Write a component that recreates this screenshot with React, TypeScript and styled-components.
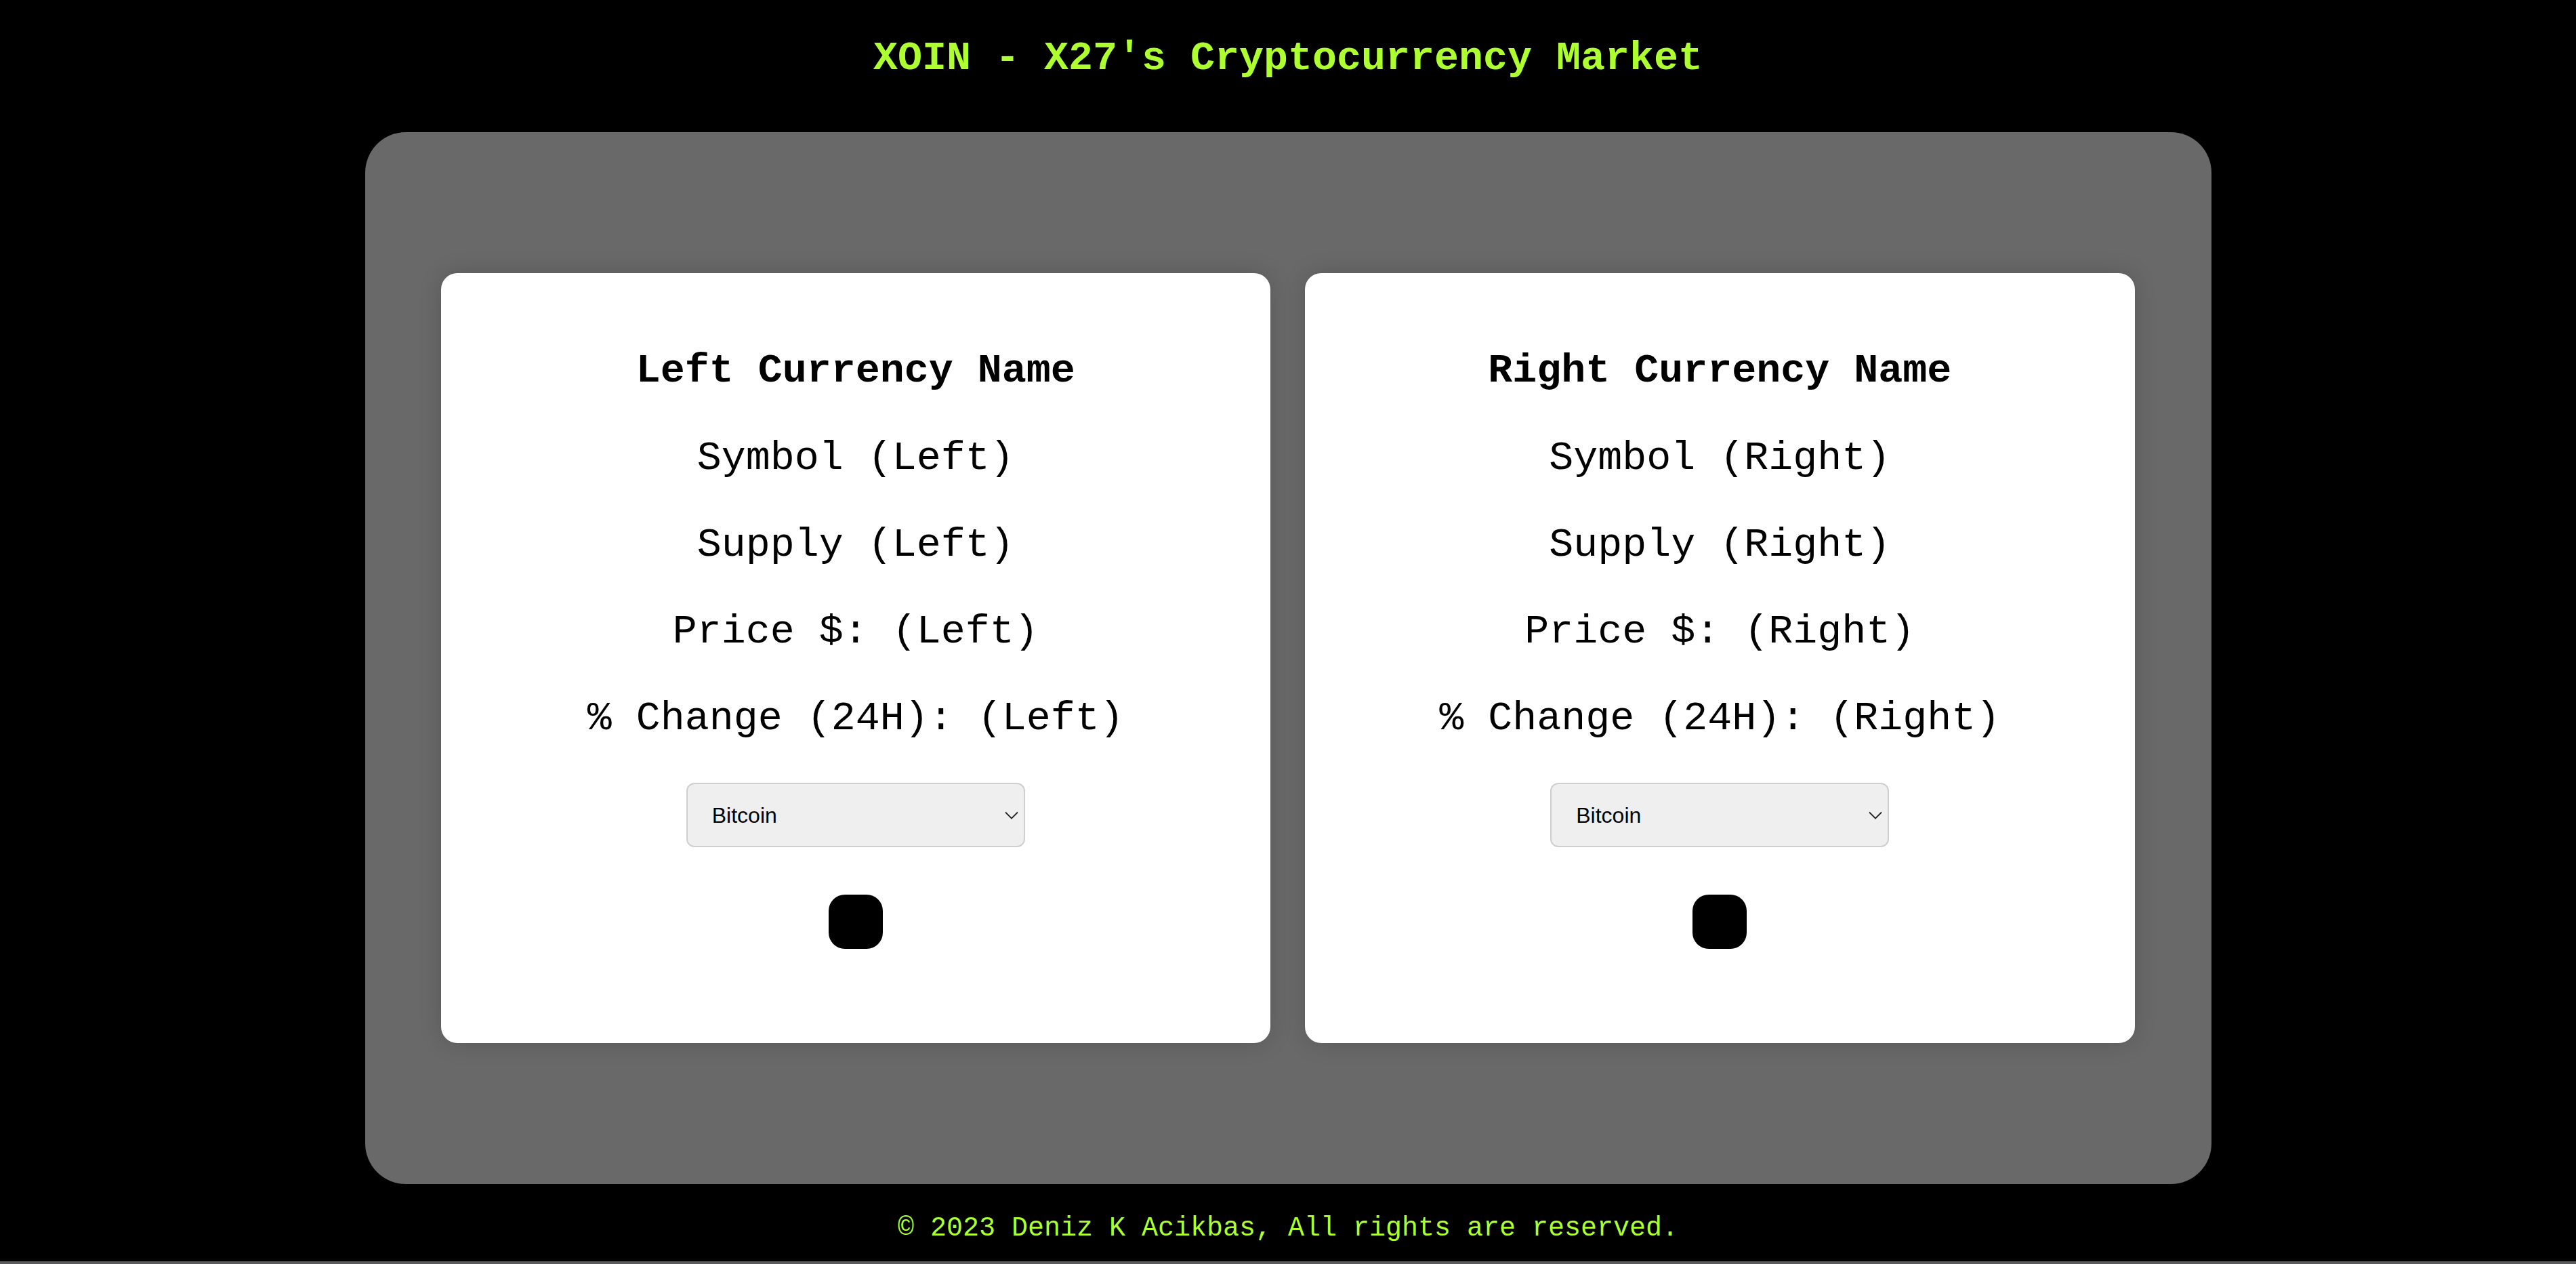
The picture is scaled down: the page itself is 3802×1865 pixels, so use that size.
import React from "react";
import styled, { createGlobalStyle } from "styled-components";

const GlobalStyle = createGlobalStyle`
  html {
    background: #5b5b5d;
  }
  body {
    margin: 0;
    font-family: "Liberation Mono", "Courier New", monospace;
  }
`;

const Page = styled.div`
  min-height: 1861px;
  background: #000;
  display: flex;
  flex-direction: column;
  align-items: center;
`;

const Title = styled.h1`
  margin: 52px 0 0;
  font-family: "Liberation Mono", "Courier New", monospace;
  font-size: 60px;
  line-height: 68px;
  font-weight: 700;
  color: #adff2f;
`;

const Panel = styled.main`
  margin-top: 75px;
  width: 2725px;
  box-sizing: border-box;
  padding: 208px 113px 208px 112px;
  background: #696969;
  border-radius: 60px;
  display: grid;
  grid-template-columns: 1fr 1fr;
  gap: 51px;
`;

const Card = styled.section`
  background: #fff;
  border-radius: 24px;
  box-shadow: 0 0 34px rgba(0, 0, 0, 0.16);
  padding: 110px 0 139px;
  display: flex;
  flex-direction: column;
  align-items: center;
`;

const CardHeading = styled.h2`
  margin: 0 0 1px;
  font-family: "Liberation Mono", "Courier New", monospace;
  font-size: 60px;
  line-height: 68px;
  font-weight: 700;
  color: #000;
`;

const Field = styled.p`
  margin: 60px 0 0;
  font-family: "Liberation Mono", "Courier New", monospace;
  font-size: 60px;
  line-height: 68px;
  font-weight: 400;
  color: #000;
  white-space: pre;
`;

const SelectWrap = styled.div`
  position: relative;
  margin-top: 61px;
  width: 500px;
  height: 95px;
`;

const Select = styled.select`
  appearance: none;
  -webkit-appearance: none;
  width: 100%;
  height: 100%;
  box-sizing: border-box;
  border: 2px solid #cfcfcf;
  border-radius: 12px;
  background: #efefef;
  color: #000;
  font-family: "Liberation Sans", Arial, sans-serif;
  font-size: 32px;
  padding: 0 0 0 36px;
  outline: none;
`;

const Chevron = styled.svg`
  position: absolute;
  right: 10px;
  top: 50%;
  width: 20px;
  height: 12px;
  margin-top: -6px;
  pointer-events: none;
`;

const SwapButton = styled.button`
  margin-top: 70px;
  width: 80px;
  height: 80px;
  border: none;
  border-radius: 24px;
  background: #000;
  padding: 0;
  cursor: pointer;
`;

const Footer = styled.footer`
  margin-top: 43px;
  font-family: "Liberation Mono", "Courier New", monospace;
  font-size: 40px;
  line-height: 45px;
  color: #adff2f;
`;

type Side = "Left" | "Right";

const CurrencyCard: React.FC<{ side: Side }> = ({ side }) => (
  <Card>
    <CardHeading>{side} Currency Name</CardHeading>
    <Field>Symbol ({side})</Field>
    <Field>Supply ({side})</Field>
    <Field>Price $: ({side})</Field>
    <Field>% Change (24H): ({side})</Field>
    <SelectWrap>
      <Select defaultValue="bitcoin">
        <option value="bitcoin">Bitcoin</option>
        <option value="ethereum">Ethereum</option>
        <option value="tether">Tether</option>
      </Select>
      <Chevron viewBox="0 0 20 12" fill="none">
        <path d="M1 1.5 L10 10.5 L19 1.5" stroke="#222" strokeWidth="1.8" />
      </Chevron>
    </SelectWrap>
    <SwapButton aria-label={`${side} action`} />
  </Card>
);

export default function App() {
  return (
    <>
      <GlobalStyle />
      <Page>
        <Title>XOIN - X27's Cryptocurrency Market</Title>
        <Panel>
          <CurrencyCard side="Left" />
          <CurrencyCard side="Right" />
        </Panel>
        <Footer>© 2023 Deniz K Acikbas, All rights are reserved.</Footer>
      </Page>
    </>
  );
}
